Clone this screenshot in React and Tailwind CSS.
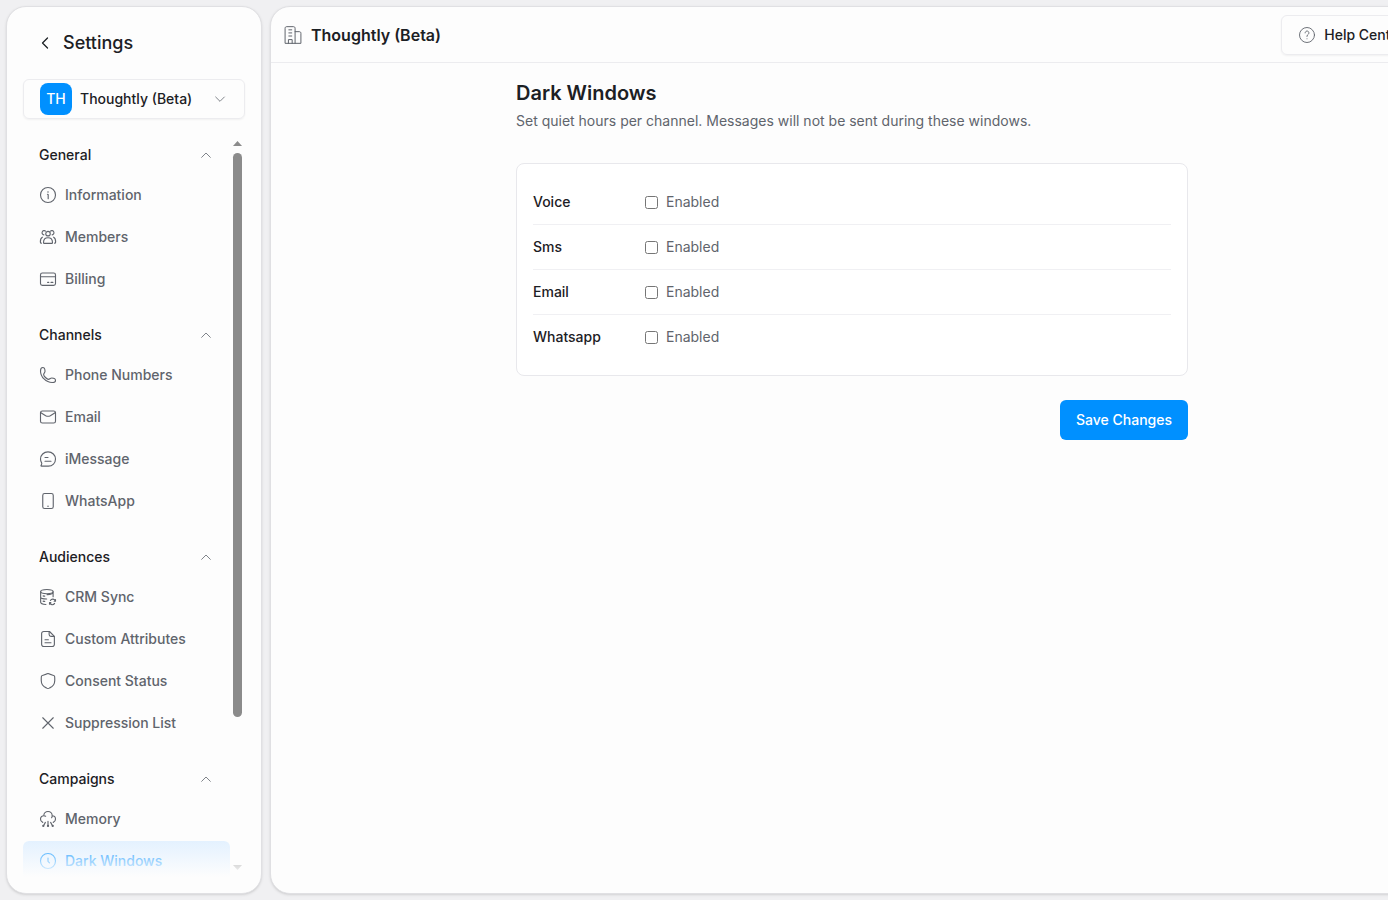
import React from 'react';
import clsx from 'clsx';

const Icon = ({ size = 18, strokeWidth = 1.5, className, children }) => (
  <svg
    width={size}
    height={size}
    viewBox="0 0 24 24"
    fill="none"
    stroke="currentColor"
    strokeWidth={strokeWidth}
    strokeLinecap="round"
    strokeLinejoin="round"
    className={clsx('shrink-0', className)}
    aria-hidden="true"
  >
    {children}
  </svg>
);

const icons = {
  information: (
    <>
      <circle cx="12" cy="12" r="10" />
      <path d="M12.24 17v-5c0-.47 0-.7-.14-.85-.15-.15-.39-.15-.86-.15" />
      <path d="M12 8h.01" strokeWidth="2" />
    </>
  ),
  members: (
    <>
      <circle cx="12" cy="7.5" r="3" />
      <path d="M6.5 9.2a2.9 2.9 0 1 1 2.3-5.1M17.5 9.2a2.9 2.9 0 1 0-2.3-5.1" />
      <path d="M6 19.5c0-4 2-6.5 6-6.5s6 2.500 6 6.500c0 .6-.3 1-1 1H7c-.7 0-1-.4-1-1Z" />
      <path d="M4.500 12.200C2.800 13 1.800 15 1.800 18.500c0 1.200.4 1.700 1.400 1.700M19.500 12.200c1.700.800 2.700 2.800 2.700 6.300 0 1.200-.4 1.700-1.400 1.700" />
    </>
  ),
  billing: (
    <>
      <rect x="2" y="4" width="20" height="16.5" rx="2.5" />
      <path d="M2 9h20M11.5 16.5h1.5M16 16.5h2.5" />
    </>
  ),
  phone: (
    <path d="M2 6.500C2 3.500 3.300 2 5 2c2 0 3 2.500 3 5 0 2-1.800 2.800-1.800 4.200 0 2.300 4.300 6.600 6.600 6.600 1.400 0 2.200-1.800 4.200-1.800 2.500 0 5 1.300 5 3.200C22 20.700 20.500 22 17.500 22 9.500 22 2 14.500 2 6.500Z" />
  ),
  email: (
    <>
      <rect x="2" y="4" width="20" height="16" rx="2.5" />
      <path d="m2 6 6.91 4.2c2.53 1.4 3.65 1.4 6.18 0L22 6" />
    </>
  ),
  message: (
    <>
      <path d="M12.500 21.500C18 21.500 22 17.200 22 12c0-5.200-4.300-9.500-10-9.500S2 6.800 2 12c0 2 .6 3.700 1.500 5.200.4.700.2 1.500-.2 2.300l-.6 1.100c-.2.500 0 .900.5.900Z" />
      <path d="M8 15h8M8 10h4" />
    </>
  ),
  mobile: (
    <>
      <rect x="5" y="2" width="14" height="20" rx="2.5" />
      <path d="M12 19h.01" strokeWidth="2" />
    </>
  ),
  crm: (
    <>
      <ellipse cx="10.500" cy="4.800" rx="8.300" ry="2.800" />
      <path d="M2.200 5v14c0 1.500 2.800 2.700 7 3M2.200 12c0 1.500 3.300 2.700 8 2.700M18.800 5v6.500M18.800 5.500c0 2-3.800 3-8 3.300" />
      <path d="M5.500 10.500c.7.200 1.400.300 2.200.400M5.500 17.500c.7.200 1.400.300 2.200.400" />
      <path d="M21.800 17.500a3.600 3.600 0 0 0-6.600-.8M14.200 19.500a3.600 3.600 0 0 0 6.600 1M22 15.500v2.200h-1.800M14 21.700v-2.200h1.800" />
    </>
  ),
  attributes: (
    <>
      <path d="M3.500 19V5A2.800 2.800 0 0 1 6.300 2H14l6.500 6.500V19a2.800 2.800 0 0 1-2.800 3H6.300a2.800 2.800 0 0 1-2.800-3Z" />
      <path d="M13.500 2.500V6A2.500 2.500 0 0 0 16 8.500h4M8 17h8M8 13h4.500" />
    </>
  ),
  shield: (
    <path d="M21 11.180V8.500c0-2-.1-2.900-.5-3.300-.4-.5-1.300-.700-3-1.300l-3.200-1.100C13.100 2.300 12.600 2 12 2s-1.100.300-2.300.800L6.500 3.900c-1.700.600-2.600.800-3 1.300-.4.400-.5 1.300-.5 3.300v2.680c0 5.600 4.100 8.800 6.750 10 .72.500 1.400.820 2.250.820s1.500-.3 2.250-.820C16.900 20 21 16.800 21 11.180Z" />
  ),
  close: <path d="M19 5 5 19M5 5l14 14" />,
  memory: (
    <>
      <path d="M5 16.500A4.600 4.600 0 0 1 2 12.100C2 9.700 3.900 7.600 6.400 7.600 6.400 4.500 8.900 2 12 2s5.600 2.500 5.600 5.600c2.500 0 4.400 2 4.400 4.500a4.600 4.600 0 0 1-3 4.400M6.400 7.600c1 0 1.800.200 2.500.700M17.600 7.600c0 1-.3 1.900-.8 2.700" />
      <path d="M12 15v6M8.500 16.500 6 21M15.500 16.500 18 21" />
      <path d="M12 21.300h.01M5.700 21.300h.01M18.300 21.300h.01" strokeWidth="3" />
    </>
  ),
  clock: (
    <>
      <circle cx="12" cy="12" r="10" />
      <path d="M12 8v4.500l2 2" />
    </>
  ),
};

const sections = [
  {
    title: 'General',
    items: [
      { label: 'Information', icon: 'information' },
      { label: 'Members', icon: 'members' },
      { label: 'Billing', icon: 'billing' },
    ],
  },
  {
    title: 'Channels',
    items: [
      { label: 'Phone Numbers', icon: 'phone' },
      { label: 'Email', icon: 'email' },
      { label: 'iMessage', icon: 'message' },
      { label: 'WhatsApp', icon: 'mobile' },
    ],
  },
  {
    title: 'Audiences',
    items: [
      { label: 'CRM Sync', icon: 'crm' },
      { label: 'Custom Attributes', icon: 'attributes' },
      { label: 'Consent Status', icon: 'shield' },
      { label: 'Suppression List', icon: 'close' },
    ],
  },
  {
    title: 'Campaigns',
    items: [
      { label: 'Memory', icon: 'memory' },
      { label: 'Dark Windows', icon: 'clock', active: true },
    ],
  },
];

const channels = ['Voice', 'Sms', 'Email', 'Whatsapp'];

function NavSection({ title, items }) {
  return (
    <section>
      <button type="button" className="flex h-10 w-full items-center justify-between px-4 font-medium text-[#1c2024]">
        {title}
        <Icon size={16} strokeWidth={1.2} className="text-[#60646c]">
          <path d="m18.500 15.500-6.500-6.500-6.500 6.500" />
        </Icon>
      </button>
      <ul className="flex flex-col gap-0.5">
        {items.map((item) => (
          <li key={item.label}>
            <a
              href="#"
              className={clsx(
                'flex h-10 items-center gap-2 rounded-md px-4 font-medium',
                item.active ? 'bg-[#e1f0ff] text-[#0090ff]' : 'text-[#60646c]'
              )}
            >
              <Icon>{icons[item.icon]}</Icon>
              {item.label}
            </a>
          </li>
        ))}
      </ul>
    </section>
  );
}

function Sidebar() {
  return (
    <aside className="flex w-64 shrink-0 flex-col rounded-[20px] border border-[#e0e0e3] bg-[#fdfdfd] p-4 shadow-sm">
      <div className="flex h-10 shrink-0 items-center gap-2 px-3">
        <button type="button" aria-label="Back">
          <Icon size={20}>
            <path d="m15 6-6 6 6 6" />
          </Icon>
        </button>
        <h2 className="text-lg font-medium">Settings</h2>
      </div>

      {/* Workspace switcher */}
      <button
        type="button"
        className="mt-4 flex h-10 shrink-0 items-center gap-2 rounded-md border border-[#ececef] px-4 font-medium shadow-xs"
      >
        <span className="flex size-8 items-center justify-center rounded-lg bg-[#0090ff] text-white">TH</span>
        Thoughtly (Beta)
        <Icon size={16} strokeWidth={1.2} className="ml-auto text-[#60646c]">
          <path d="m5.500 9 6.500 6.500L18.500 9" />
        </Icon>
      </button>

      <div className="relative mt-4 flex min-h-0 flex-1 overflow-hidden">
        <nav className="flex flex-1 flex-col gap-4">
          {sections.map((section) => (
            <NavSection key={section.title} {...section} />
          ))}
        </nav>
        {/* Scroll track */}
        <div className="flex w-[15px] flex-col items-center pt-1.5 pb-[7px] text-[#8b8b8b]" aria-hidden="true">
          <svg width="9" height="5" viewBox="0 0 9 5" fill="currentColor">
            <path d="M4.500 0 9 5H0Z" />
          </svg>
          <div className="my-[7px] flex w-[9px] flex-1 flex-col">
            <div className="h-4/5 w-full rounded-full bg-current" />
          </div>
          <svg width="9" height="5" viewBox="0 0 9 5" fill="currentColor">
            <path d="M0 0h9L4.500 5Z" />
          </svg>
        </div>
        <div className="pointer-events-none absolute inset-x-0 bottom-0 h-10 bg-linear-to-t from-[#fdfdfd] to-[#fdfdfd]/0" />
      </div>
    </aside>
  );
}

function ChannelRow({ name }) {
  const id = `enabled-${name.toLowerCase()}`;

  return (
    <div className="flex items-center border-b border-[#f0f0f3] py-3 last:border-b-0">
      <span className="w-28 font-medium">{name}</span>
      <input id={id} type="checkbox" className="size-[13px]" />
      <label htmlFor={id} className="pl-2 text-[#60646c]">
        Enabled
      </label>
    </div>
  );
}

export default function App() {
  return (
    <div className="flex h-screen gap-2 overflow-hidden bg-[#f0f0f2] py-1.5 pl-1.5 font-[Inter,sans-serif] text-sm text-[#1c2024]">
      <Sidebar />

      {/* The content panel runs past the right edge of the window */}
      <div className="-mr-[46px] flex min-w-0 flex-1 flex-col rounded-[20px] border border-[#e0e0e3] bg-[#fdfdfd] shadow-sm">
        <header className="flex h-14 shrink-0 items-center justify-between border-b border-[#ececef] px-3">
          <div className="flex items-center gap-2">
            <Icon size={20} strokeWidth={1.2} className="text-[#60646c]">
              <path d="M14.500 22V4c0-1.300-.7-2-2-2h-8c-1.300 0-2 .700-2 2v18h19V10c0-1.300-.7-2-2-2h-5" />
              <path d="M6.500 22v-4.500h4.500V22M7 5.800h3.500M7 9.500h3.500M7 13.200h3.500" />
            </Icon>
            <h2 className="text-base font-semibold">Thoughtly (Beta)</h2>
          </div>
          <button
            type="button"
            className="flex h-10 items-center gap-2 rounded-md border border-[#ececef] px-4 font-medium shadow-xs"
          >
            <Icon strokeWidth={1.2} className="text-[#60646c]">
              <circle cx="12" cy="12" r="10" />
              <path d="M9.500 9.200a2.500 2.500 0 1 1 4.300 1.700c-.8.800-1.800 1.300-1.800 2.600v.5M12 17h.01" />
            </Icon>
            Help Center
          </button>
        </header>

        <main className="mx-auto w-full max-w-2xl pt-4">
          <h1 className="text-xl font-semibold">Dark Windows</h1>
          <p className="mt-1 text-[#60646c]">
            Set quiet hours per channel. Messages will not be sent during these windows.
          </p>

          <form onSubmit={(e) => e.preventDefault()}>
            <div className="mt-8 rounded-lg border border-[#e8e8ec] bg-white p-4">
              {channels.map((name) => (
                <ChannelRow key={name} name={name} />
              ))}
            </div>
            <div className="mt-6 flex justify-end">
              <button type="submit" className="h-10 rounded-md bg-[#0090ff] px-4 font-medium text-white">
                Save Changes
              </button>
            </div>
          </form>
        </main>
      </div>
    </div>
  );
}
